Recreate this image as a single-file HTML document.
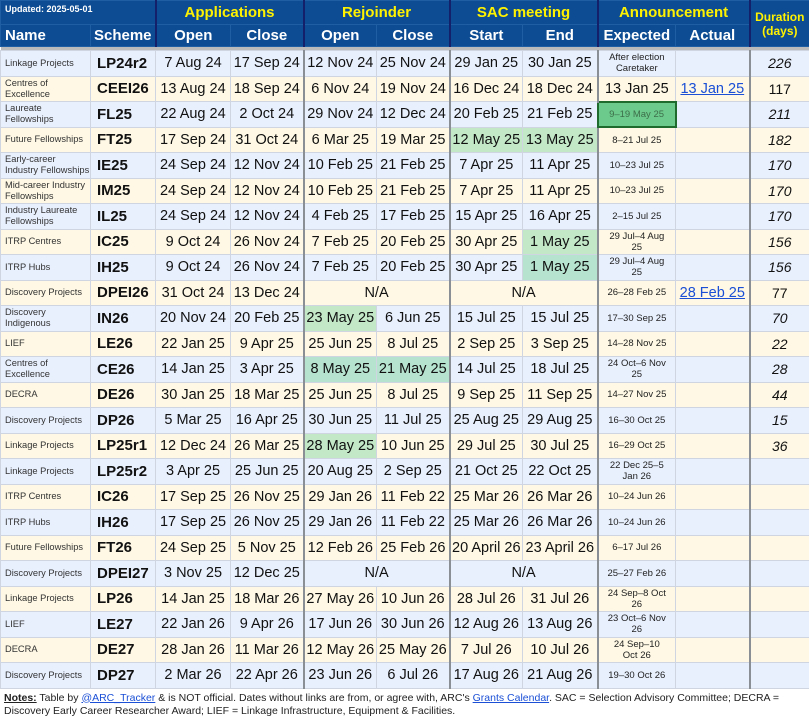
<!DOCTYPE html>
<html><head><meta charset="utf-8"><style>
*{margin:0;padding:0;box-sizing:border-box}
body{width:809px;height:719px;background:#fff;font-family:"Liberation Sans",Arial,sans-serif;overflow:hidden}
table{border-collapse:collapse;table-layout:fixed;width:809px}
th{background:#0d4c92;color:#fff;font-weight:bold;border:1px solid #1f5ea3;padding:0}
th.g{color:#fff200;font-size:15px;height:24px}
th.c{font-size:15px;height:22px}
.gl{border-left:2px solid #14206a!important}
td{border:1px solid #cfd6e2;text-align:center;font-size:14.5px;color:#111;padding:0;white-space:nowrap;overflow:hidden}
tr.d{height:25.5px}
tr.b td{background:#e8f0fe}
tr.y td{background:#fef8e4}
td.n{font-size:9.3px;text-align:left;padding-left:4px;white-space:normal;line-height:11px;color:#333}
td.s{font-weight:bold;font-size:15px;text-align:left;padding-left:6px}
td.e{font-size:9.5px;line-height:11px;white-space:normal;color:#222;padding:0 8px}
td.du{font-style:italic;font-size:14px}
td.nd{font-size:14px}
.L{border-left:2px solid #8a8f96!important}
tr td.gr{background:#c2e8c8}
tr td.tl{background:#b6e3d0}
tr td.fg{background:#6ccb8c;border:2px solid #1f6b2e;color:#3d6e4a;font-size:9.5px}
a{color:#1a4fd6;text-decoration:underline}
.gap td{height:4px;background:#bbb;border:none;padding:0}
.notes{font-size:10.5px;line-height:13px;padding:3px 4px;color:#222}
</style></head><body>
<table>
<colgroup><col style="width:90px"><col style="width:65px"><col style="width:75px"><col style="width:73px"><col style="width:73px"><col style="width:73px"><col style="width:73px"><col style="width:75px"><col style="width:78px"><col style="width:74px"><col style="width:60px"></colgroup>
<tr><th colspan="2" style="text-align:left;vertical-align:top;font-size:9px;padding:3px 4px;height:24px;border-right:2px solid #14206a">Updated: 2025-05-01</th><th colspan="2" class="g">Applications</th><th colspan="2" class="g gl">Rejoinder</th><th colspan="2" class="g gl">SAC meeting</th><th colspan="2" class="g gl">Announcement</th><th rowspan="2" class="gl" style="color:#fff200;font-size:12px;line-height:14px">Duration<br>(days)</th></tr>
<tr><th class="c" style="text-align:left;padding-left:4px">Name</th><th class="c" style="border-right:2px solid #14206a">Scheme</th><th class="c">Open</th><th class="c">Close</th><th class="c gl">Open</th><th class="c">Close</th><th class="c gl">Start</th><th class="c">End</th><th class="c gl">Expected</th><th class="c">Actual</th></tr>
<tr class="gap"><td colspan="11"></td></tr>
<tr class="d b"><td class="n">Linkage Projects</td><td class="s">LP24r2</td><td>7 Aug 24</td><td>17 Sep 24</td><td class="L">12 Nov 24</td><td>25 Nov 24</td><td class="L">29 Jan 25</td><td>30 Jan 25</td><td class="e L">After election Caretaker</td><td></td><td class="du L">226</td></tr>
<tr class="d y"><td class="n">Centres of Excellence</td><td class="s">CEEI26</td><td>13 Aug 24</td><td>18 Sep 24</td><td class="L">6 Nov 24</td><td>19 Nov 24</td><td class="L">16 Dec 24</td><td>18 Dec 24</td><td class="L">13 Jan 25</td><td><a>13 Jan 25</a></td><td class="nd L">117</td></tr>
<tr class="d b"><td class="n">Laureate Fellowships</td><td class="s">FL25</td><td>22 Aug 24</td><td>2 Oct 24</td><td class="L">29 Nov 24</td><td>12 Dec 24</td><td class="L">20 Feb 25</td><td>21 Feb 25</td><td class="fg">9–19 May 25</td><td></td><td class="du L">211</td></tr>
<tr class="d y"><td class="n">Future Fellowships</td><td class="s">FT25</td><td>17 Sep 24</td><td>31 Oct 24</td><td class="L">6 Mar 25</td><td>19 Mar 25</td><td class="L gr">12 May 25</td><td class="gr">13 May 25</td><td class="e L">8–21 Jul 25</td><td></td><td class="du L">182</td></tr>
<tr class="d b"><td class="n">Early-career Industry Fellowships</td><td class="s">IE25</td><td>24 Sep 24</td><td>12 Nov 24</td><td class="L">10 Feb 25</td><td>21 Feb 25</td><td class="L">7 Apr 25</td><td>11 Apr 25</td><td class="e L">10–23 Jul 25</td><td></td><td class="du L">170</td></tr>
<tr class="d y"><td class="n">Mid-career Industry Fellowships</td><td class="s">IM25</td><td>24 Sep 24</td><td>12 Nov 24</td><td class="L">10 Feb 25</td><td>21 Feb 25</td><td class="L">7 Apr 25</td><td>11 Apr 25</td><td class="e L">10–23 Jul 25</td><td></td><td class="du L">170</td></tr>
<tr class="d b"><td class="n">Industry Laureate Fellowships</td><td class="s">IL25</td><td>24 Sep 24</td><td>12 Nov 24</td><td class="L">4 Feb 25</td><td>17 Feb 25</td><td class="L">15 Apr 25</td><td>16 Apr 25</td><td class="e L">2–15 Jul 25</td><td></td><td class="du L">170</td></tr>
<tr class="d y"><td class="n">ITRP Centres</td><td class="s">IC25</td><td>9 Oct 24</td><td>26 Nov 24</td><td class="L">7 Feb 25</td><td>20 Feb 25</td><td class="L">30 Apr 25</td><td class="gr">1 May 25</td><td class="e L">29 Jul–4 Aug 25</td><td></td><td class="du L">156</td></tr>
<tr class="d b"><td class="n">ITRP Hubs</td><td class="s">IH25</td><td>9 Oct 24</td><td>26 Nov 24</td><td class="L">7 Feb 25</td><td>20 Feb 25</td><td class="L">30 Apr 25</td><td class="tl">1 May 25</td><td class="e L">29 Jul–4 Aug 25</td><td></td><td class="du L">156</td></tr>
<tr class="d y"><td class="n">Discovery Projects</td><td class="s">DPEI26</td><td>31 Oct 24</td><td>13 Dec 24</td><td class="L" colspan="2">N/A</td><td class="L" colspan="2">N/A</td><td class="e L">26–28 Feb 25</td><td><a>28 Feb 25</a></td><td class="nd L">77</td></tr>
<tr class="d b"><td class="n">Discovery Indigenous</td><td class="s">IN26</td><td>20 Nov 24</td><td>20 Feb 25</td><td class="L gr">23 May 25</td><td>6 Jun 25</td><td class="L">15 Jul 25</td><td>15 Jul 25</td><td class="e L">17–30 Sep 25</td><td></td><td class="du L">70</td></tr>
<tr class="d y"><td class="n">LIEF</td><td class="s">LE26</td><td>22 Jan 25</td><td>9 Apr 25</td><td class="L">25 Jun 25</td><td>8 Jul 25</td><td class="L">2 Sep 25</td><td>3 Sep 25</td><td class="e L">14–28 Nov 25</td><td></td><td class="du L">22</td></tr>
<tr class="d b"><td class="n">Centres of Excellence</td><td class="s">CE26</td><td>14 Jan 25</td><td>3 Apr 25</td><td class="L tl">8 May 25</td><td class="tl">21 May 25</td><td class="L">14 Jul 25</td><td>18 Jul 25</td><td class="e L">24 Oct–6 Nov 25</td><td></td><td class="du L">28</td></tr>
<tr class="d y"><td class="n">DECRA</td><td class="s">DE26</td><td>30 Jan 25</td><td>18 Mar 25</td><td class="L">25 Jun 25</td><td>8 Jul 25</td><td class="L">9 Sep 25</td><td>11 Sep 25</td><td class="e L">14–27 Nov 25</td><td></td><td class="du L">44</td></tr>
<tr class="d b"><td class="n">Discovery Projects</td><td class="s">DP26</td><td>5 Mar 25</td><td>16 Apr 25</td><td class="L">30 Jun 25</td><td>11 Jul 25</td><td class="L">25 Aug 25</td><td>29 Aug 25</td><td class="e L">16–30 Oct 25</td><td></td><td class="du L">15</td></tr>
<tr class="d y"><td class="n">Linkage Projects</td><td class="s">LP25r1</td><td>12 Dec 24</td><td>26 Mar 25</td><td class="L gr">28 May 25</td><td>10 Jun 25</td><td class="L">29 Jul 25</td><td>30 Jul 25</td><td class="e L">16–29 Oct 25</td><td></td><td class="du L">36</td></tr>
<tr class="d b"><td class="n">Linkage Projects</td><td class="s">LP25r2</td><td>3 Apr 25</td><td>25 Jun 25</td><td class="L">20 Aug 25</td><td>2 Sep 25</td><td class="L">21 Oct 25</td><td>22 Oct 25</td><td class="e L">22 Dec 25–5 Jan 26</td><td></td><td class="L"></td></tr>
<tr class="d y"><td class="n">ITRP Centres</td><td class="s">IC26</td><td>17 Sep 25</td><td>26 Nov 25</td><td class="L">29 Jan 26</td><td>11 Feb 22</td><td class="L">25 Mar 26</td><td>26 Mar 26</td><td class="e L">10–24 Jun 26</td><td></td><td class="L"></td></tr>
<tr class="d b"><td class="n">ITRP Hubs</td><td class="s">IH26</td><td>17 Sep 25</td><td>26 Nov 25</td><td class="L">29 Jan 26</td><td>11 Feb 22</td><td class="L">25 Mar 26</td><td>26 Mar 26</td><td class="e L">10–24 Jun 26</td><td></td><td class="L"></td></tr>
<tr class="d y"><td class="n">Future Fellowships</td><td class="s">FT26</td><td>24 Sep 25</td><td>5 Nov 25</td><td class="L">12 Feb 26</td><td>25 Feb 26</td><td class="L">20 April 26</td><td>23 April 26</td><td class="e L">6–17 Jul 26</td><td></td><td class="L"></td></tr>
<tr class="d b"><td class="n">Discovery Projects</td><td class="s">DPEI27</td><td>3 Nov 25</td><td>12 Dec 25</td><td class="L" colspan="2">N/A</td><td class="L" colspan="2">N/A</td><td class="e L">25–27 Feb 26</td><td></td><td class="L"></td></tr>
<tr class="d y"><td class="n">Linkage Projects</td><td class="s">LP26</td><td>14 Jan 25</td><td>18 Mar 26</td><td class="L">27 May 26</td><td>10 Jun 26</td><td class="L">28 Jul 26</td><td>31 Jul 26</td><td class="e L">24 Sep–8 Oct 26</td><td></td><td class="L"></td></tr>
<tr class="d b"><td class="n">LIEF</td><td class="s">LE27</td><td>22 Jan 26</td><td>9 Apr 26</td><td class="L">17 Jun 26</td><td>30 Jun 26</td><td class="L">12 Aug 26</td><td>13 Aug 26</td><td class="e L">23 Oct–6 Nov 26</td><td></td><td class="L"></td></tr>
<tr class="d y"><td class="n">DECRA</td><td class="s">DE27</td><td>28 Jan 26</td><td>11 Mar 26</td><td class="L">12 May 26</td><td>25 May 26</td><td class="L">7 Jul 26</td><td>10 Jul 26</td><td class="e L">24 Sep–10 Oct 26</td><td></td><td class="L"></td></tr>
<tr class="d b"><td class="n">Discovery Projects</td><td class="s">DP27</td><td>2 Mar 26</td><td>22 Apr 26</td><td class="L">23 Jun 26</td><td>6 Jul 26</td><td class="L">17 Aug 26</td><td>21 Aug 26</td><td class="e L">19–30 Oct 26</td><td></td><td class="L"></td></tr>
</table>
<div class="notes"><b><u>Notes:</u></b> Table by <a>@ARC_Tracker</a> &amp; is NOT official. Dates without links are from, or agree with, ARC's <a>Grants Calendar</a>. SAC = Selection Advisory Committee; DECRA = Discovery Early Career Researcher Award; LIEF = Linkage Infrastructure, Equipment &amp; Facilities.</div>
</body></html>
